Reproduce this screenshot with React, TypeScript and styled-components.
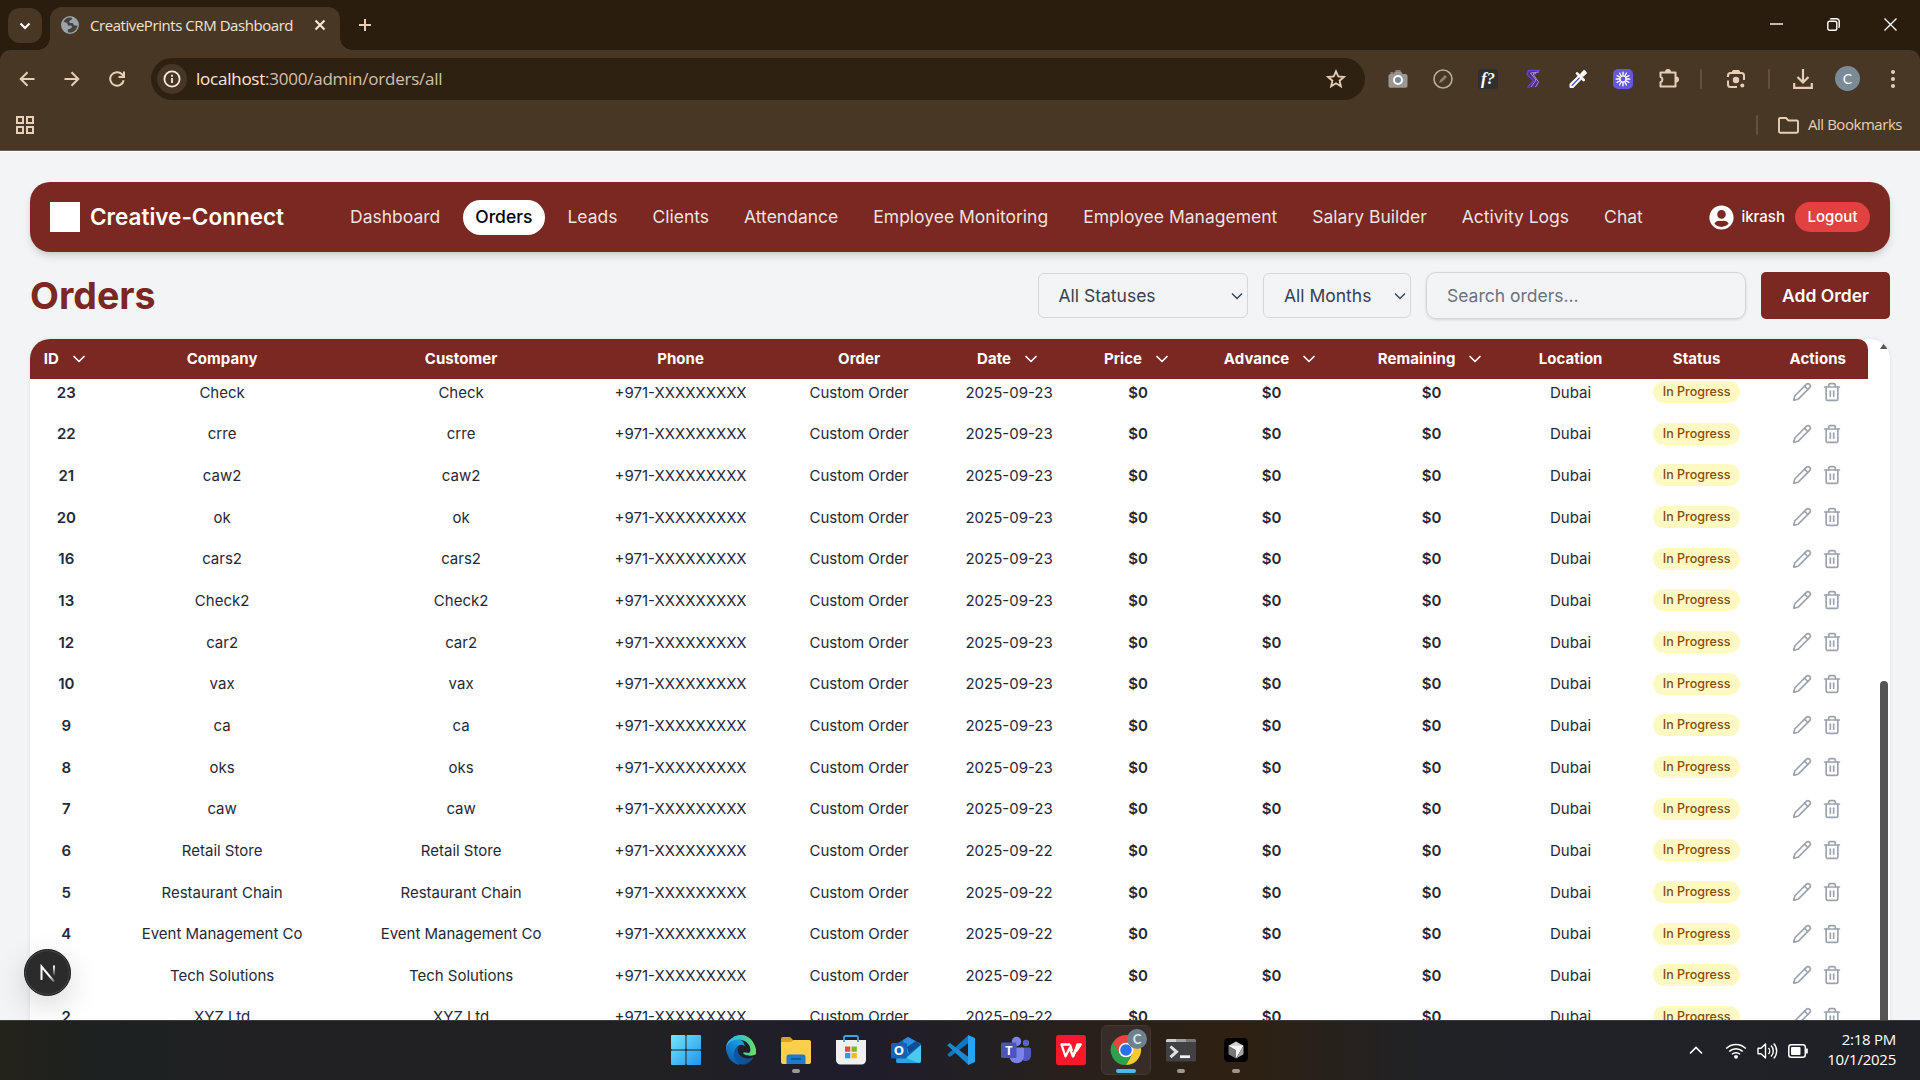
import React from "react";
import styled, { createGlobalStyle, css } from "styled-components";
import { ChevronDown, Pencil, Trash2 } from "lucide-react";
import { FaUserCircle } from "react-icons/fa";

const maroon = "#7a2821";
const cream = "#e6cfb6";
const segoe = `"Segoe UI", "Open Sans", "Noto Sans", sans-serif`;

const GlobalStyle = createGlobalStyle`
  * { box-sizing: border-box; }
  body { margin: 0; overflow: hidden; background: #f3f4f6; font-family: Inter, "Liberation Sans", sans-serif; }
  svg { display: block; flex: none; }
`;

const Screen = styled.div`
  width: 1920px;
  height: 1080px;
  display: flex;
  flex-direction: column;
  overflow: hidden;
`;

/* ---------- Browser frame ---------- */

const Browser = styled.header`
  height: 151px;
  flex: none;
  background: #483725;
  font-family: ${segoe};
  color: ${cream};
  border-bottom: 1px solid #6d5f50;
`;

const TabStrip = styled.div`
  height: 50px;
  display: flex;
  background: #2b1d0d;
`;

const TabSearch = styled.div`
  width: 34px;
  height: 35px;
  margin: 8px 8px 0;
  border-radius: 12px;
  background: #483725;
  display: grid;
  place-items: center;
`;

const Tab = styled.div`
  position: relative;
  width: 290px;
  height: 43px;
  margin-top: 7px;
  border-radius: 12px 12px 0 0;
  background: #483725;
  display: flex;
  align-items: center;
  padding: 0 11px 7px;
  &::before,
  &::after {
    content: "";
    position: absolute;
    bottom: 0;
    width: 12px;
    height: 12px;
  }
  &::before {
    left: -12px;
    background: radial-gradient(circle at 0 0, transparent 11.5px, #483725 12px);
  }
  &::after {
    right: -12px;
    background: radial-gradient(circle at 100% 0, transparent 11.5px, #483725 12px);
  }
`;

const TabTitle = styled.span`
  flex: 1;
  margin: 0 0 0 11px;
  font-size: 15px;
  letter-spacing: -0.44px;
  color: #f6e3cf;
  white-space: nowrap;
`;

const NewTab = styled.div`
  width: 50px;
  display: grid;
  place-items: center;
`;

const WindowControls = styled.div`
  margin-left: auto;
  padding-right: 1px;
  display: flex;
`;

const WindowButton = styled.div`
  width: 57px;
  padding-bottom: 1px;
  display: grid;
  place-items: center;
`;

const ToolbarTop = styled.div`
  background: #2b1d0d;
`;

const Toolbar = styled.div`
  height: 57px;
  display: flex;
  align-items: center;
  padding-left: 4.5px;
  background: #483725;
  border-radius: 10px 10px 0 0;
`;

const ToolCell = styled.div<{ $w?: number }>`
  width: ${(p) => p.$w ?? 45}px;
  height: 40px;
  flex: none;
  display: grid;
  place-items: center;
`;

const Omnibox = styled.div`
  width: 1214px;
  height: 42px;
  margin: 1px 11px 0 11px;
  flex: none;
  display: flex;
  align-items: center;
  border-radius: 21px;
  background: #2f2112;
  padding: 0 19px 0 6px;
`;

const InfoBadge = styled.div`
  width: 30px;
  height: 30px;
  border-radius: 50%;
  background: #463628;
  display: grid;
  place-items: center;
`;

const Url = styled.div`
  flex: 1;
  margin: 0 0 1px 9.5px;
  font-size: 17px;
  letter-spacing: -0.24px;
  color: #d4c0ab;
  b {
    font-weight: 400;
    color: #fbead8;
  }
`;

const Divider = styled.i`
  width: 2px;
  height: 20px;
  border-radius: 1px;
  background: #665039;
`;

const ProfileDot = styled.div`
  width: 25px;
  height: 25px;
  border-radius: 50%;
  background: #7b8b96;
  color: #fff;
  font: 400 14px/25px Lato, sans-serif;
  text-align: center;
`;

const Bookmarks = styled.div`
  height: 36px;
  display: flex;
  align-items: center;
  padding: 0 18px 0 16px;
`;

const BookmarksRight = styled.div`
  margin-left: auto;
  display: flex;
  align-items: center;
  font-size: 15px;
  letter-spacing: -0.46px;
  ${Divider} {
    margin-right: 20px;
  }
  span {
    margin: 0 0 2px 9.5px;
  }
`;

/* ---------- Application page ---------- */

const Page = styled.main`
  height: 869px;
  flex: none;
  padding: 31px 30px 0;
  overflow: hidden;
  background: #f3f4f6;
  display: flex;
  flex-direction: column;
  box-shadow: inset 0 1px #fff;
`;

const Nav = styled.nav`
  height: 70px;
  flex: none;
  display: flex;
  align-items: center;
  padding: 0 20px;
  border-radius: 20px;
  background: ${maroon};
  color: #fff;
  box-shadow: 0 5px 8px -1px rgba(0, 0, 0, 0.14), 0 2px 5px -2px rgba(0, 0, 0, 0.1);
`;

const Logo = styled.div`
  width: 30px;
  height: 30px;
  background: #fff;
`;

const Brand = styled.div`
  width: 194px;
  margin: 0 53.5px 1px 10px;
  font-size: 22.5px;
  font-weight: 600;
  white-space: nowrap;
`;

const NavLinks = styled.div`
  display: flex;
  gap: 10px;
`;

const NavLink = styled.a<{ $active?: boolean }>`
  height: 35px;
  padding: 0 12.5px;
  border-radius: 18px;
  font-size: 17.5px;
  line-height: 34px;
  white-space: nowrap;
  color: rgba(255, 255, 255, 0.88);
  ${(p) =>
    p.$active &&
    css`
      background: #fff;
      color: #000;
      font-weight: 500;
    `}
`;

const Account = styled.div`
  margin-left: auto;
  display: flex;
  align-items: center;
  font-size: 15px;
  font-weight: 500;
  span {
    margin: 0 10px 2px 7.5px;
  }
`;

const Logout = styled.button`
  height: 30px;
  padding: 0 12.5px 1px;
  border: 0;
  border-radius: 15px;
  background: #e14141;
  color: #fff;
  font: inherit;
`;

const Controls = styled.section`
  height: 47px;
  flex: none;
  margin: 20px 0;
  display: flex;
  align-items: center;
  gap: 15px;
`;

const Heading = styled.h1`
  margin: 0 auto 0 0;
  font-size: 37.5px;
  letter-spacing: 0;
  line-height: 47px;
  font-weight: 700;
  color: ${maroon};
`;

const Select = styled.div<{ $w: number }>`
  width: ${(p) => p.$w}px;
  height: 45px;
  display: flex;
  align-items: center;
  justify-content: space-between;
  padding: 0 4px 0 20px;
  border: 1px solid #d4d7dc;
  border-radius: 6px;
  font-size: 17.5px;
  color: #374151;
`;

const Search = styled.input`
  width: 320px;
  height: 47px;
  padding: 0 20px;
  border: 1px solid #d1d5db;
  border-radius: 10px;
  background: transparent;
  font: 400 17.5px Inter, sans-serif;
  box-shadow: 0 1px 3px rgba(0, 0, 0, 0.12);
  &::placeholder {
    color: #6b7280;
    opacity: 1;
  }
`;

const AddButton = styled.button`
  width: 129px;
  height: 47px;
  border: 0;
  border-radius: 5px;
  background: ${maroon};
  color: #fff;
  font: 600 17.5px Inter, sans-serif;
`;

const TableCard = styled.section`
  height: 700px;
  flex: none;
  display: flex;
  border-radius: 20px 20px 0 0;
  background: #fff;
  overflow: hidden;
  box-shadow: 0 0 4px rgba(0, 0, 0, 0.09);
`;

const Table = styled.div`
  width: 1838px;
  display: flex;
  flex-direction: column;
`;

const gridColumns = css`
  display: grid;
  grid-template-columns: 72.6px 239px 239px 200px 157px 143px 115px 152px 168px 110px 142px 100.4px;
  align-items: center;
  justify-items: center;
`;

const HeadRow = styled.div`
  ${gridColumns};
  height: 40px;
  padding-bottom: 1px;
  flex: none;
  background: ${maroon};
  border-top-right-radius: 10px;
  color: #fff;
  font-size: 15px;
  font-weight: 700;
  letter-spacing: 0.05px;
`;

const HeadCell = styled.div`
  display: flex;
  align-items: center;
  gap: 10px;
`;

const BodyScroll = styled.div`
  flex: 1;
  min-height: 0;
  overflow: hidden;
`;

const BodyRows = styled.div`
  margin-top: -7.7px;
`;

const Row = styled.div`
  ${gridColumns};
  height: 41.67px;
  font-size: 15px;
  color: #1f2937;
`;

const Cell = styled.div<{ $strong?: boolean }>`
  font-weight: ${(p) => (p.$strong ? 600 : 400)};
  white-space: nowrap;
`;

const Badge = styled.span`
  height: 22px;
  padding: 0 10px;
  border-radius: 11px;
  background: #fef9c3;
  color: #854d0e;
  font-size: 12.5px;
  font-weight: 500;
  line-height: 22px;
`;

const Actions = styled.div`
  display: flex;
  gap: 10px;
  margin-right: 2px;
  color: #9ca3af;
`;

const Scrollbar = styled.div`
  width: 22px;
  display: flex;
  flex-direction: column;
  align-items: center;
  padding: 4px 0 0 11px;
`;

const Thumb = styled.div`
  width: 8px;
  height: 400px;
  margin: 332px 1px 0 0;
  flex: none;
  border-radius: 4px;
  background: #555;
`;

const ArrowUp = styled.i`
  margin-right: 1px;
  border: 4px solid transparent;
  border-top: 0;
  border-bottom: 6px solid #555;
`;

const DevBadge = styled.div`
  position: absolute;
  left: 24px;
  top: 949px;
  width: 47px;
  height: 47px;
  border-radius: 50%;
  background: #2b2b2b;
  border: 1px solid #161616;
  box-shadow: inset 0 0 0 1px #4a4a4a, 0 10px 30px rgba(0, 0, 0, 0.16);
  display: grid;
  place-items: center;
`;

/* ---------- Taskbar ---------- */

const Taskbar = styled.footer`
  position: relative;
  height: 60px;
  flex: none;
  display: flex;
  border-top: 1px solid #3b3b3b;
  padding-left: 658px;
  font-family: ${segoe};
  background: linear-gradient(
    90deg,
    #24221b 0,
    #1c2121 110px,
    #212123 220px,
    #212123 660px,
    #1f1c2c 850px,
    #222024 960px,
    #2a2018 1120px,
    #2e2112 1240px,
    #212226 1420px,
    #202126 1920px
  );
`;

const AppSlot = styled.div<{ $active?: boolean }>`
  width: ${(p) => (p.$active ? 50 : 55)}px;
  height: 50px;
  margin: ${(p) => (p.$active ? "4px 2.5px 0" : "4px 0 0")};
  border-radius: 6px;
  border: 1px solid ${(p) => (p.$active ? "#443833" : "transparent")};
  background: ${(p) => (p.$active ? "#372c28" : "transparent")};
  display: flex;
  flex-direction: column;
  align-items: center;
  padding-top: 9px;
`;

const Indicator = styled.i<{ $active?: boolean }>`
  width: ${(p) => (p.$active ? 20 : 8)}px;
  height: 4px;
  margin-top: 4px;
  border-radius: 2px;
  background: ${(p) => (p.$active ? "#4cb9ef" : "#9b9792")};
`;

const Tray = styled.div`
  margin-left: auto;
  display: flex;
  align-items: center;
  padding-right: 24px;
  color: #fff;
`;

const TrayCell = styled.div<{ $w: number }>`
  width: ${(p) => p.$w}px;
  display: grid;
  place-items: center;
`;

const Clock = styled.div`
  width: 78px;
  margin-bottom: 4px;
  text-align: right;
  font-size: 15px;
  line-height: 20px;
  letter-spacing: -0.25px;
`;

/* ---------- Icons ---------- */

type StrokeProps = { w: number; h?: number; box: string; sw?: number; color?: string; children: React.ReactNode };
const Stroke = ({ w, h = w, box, sw = 2, color = cream, children }: StrokeProps) => (
  <svg width={w} height={h} viewBox={box} fill="none" stroke={color} strokeWidth={sw}>
    {children}
  </svg>
);

const GlobeIcon = () => (
  <svg width="18" height="18" viewBox="0 0 18 18">
    <circle cx="9" cy="9" r="9" fill="#9aa3ab" />
    <path d="M10.5 1.6c-3.4-.6-6.500 1-8 4 1 .9 2.300.600 3.400 1.500 1 .8.300 2 1.500 2.400 1.300.4 2.200-.3 3.100.5.9.7.3 1.700-.5 2.300-1 .8-2.900.4-3.200 1.800-.2.9.3 1.600.7 2.300 4.600.8 8.500-2.600 9-6.700-1.100-.4-1.800.3-2.900-.1-1.300-.5-1-2-2.300-2.500-1.200-.4-2.600.3-3-.8-.5-1.300 1.700-1.800 2.400-2.700.4-.6.1-1.400-.2-2z" fill="#46413a" />
  </svg>
);

const CameraIcon = () => (
  <svg width="20" height="20" viewBox="0 0 20 20">
    <path d="M2.500 5h3L7 2.500h6L14.500 5h3A2 2 0 0 1 19.500 7v10a1.800 1.800 0 0 1-1.800 1.800H2.300A1.800 1.800 0 0 1 .5 17V7a2 2 0 0 1 2-2z" fill="#9b9792" />
    <path d="M2.500 3h3v2h-3zM7.500 1h5v2h-5z" fill="#85807a" />
    <circle cx="10" cy="11" r="4" fill="#7c8794" stroke="#fff" strokeWidth="2" />
  </svg>
);

const SparkSIcon = () => (
  <svg width="18" height="20" viewBox="0 0 18 20" fill="none" strokeLinejoin="round">
    <path d="M16 1H4L2.500 5.500l6.500 6L3 19h9l4-4.500-5-7z" fill="#4b2f80" />
    <path d="M16 1.500H4.500L3 5.500l6.500 6L3.500 18.500" stroke="#6b3fd0" strokeWidth="1.500" />
    <path d="M15 3 6.500 4l5.500 7-5 7M12 4.500 9 5l5.500 8-3 5" stroke="#b39adf" strokeWidth=".9" />
  </svg>
);

const DropperIcon = () => (
  <svg width="20" height="20" viewBox="0 0 20 20">
    <path d="M12 6 2.500 15.500V18h2.300L14 8.500" fill="#2b4bc4" stroke="#fff" strokeWidth="2" strokeLinejoin="round" />
    <path d="M9 4.300 15.700 11M13 7l4-4" stroke="#fff" strokeWidth="2.600" strokeLinecap="round" />
    <path d="m12 5 4-4.200 3.200 3.200L15 8z" fill="#fff" />
  </svg>
);

const BurstIcon = () => (
  <svg width="20" height="20" viewBox="0 0 20 20">
    <rect width="20" height="20" rx="5" fill="#6557e0" />
    <g stroke="#fff" strokeWidth="1.300" strokeLinecap="round">
      {Array.from({ length: 12 }, (_, i) => (
        <path key={i} d="M10 6.800V3.200" transform={`rotate(${i * 30} 10 10)`} />
      ))}
    </g>
    <circle cx="10" cy="10" r="3" fill="#6557e0" stroke="#fff" strokeWidth="1.200" />
  </svg>
);

const LensIcon = () => (
  <Stroke w={20} box="0 0 20 20" sw={2}>
    <path d="M2 8V6.500A2.500 2.500 0 0 1 4.500 4h11A2.500 2.500 0 0 1 18 6.500V11M2 11.500v4A2.500 2.500 0 0 0 4.500 18H11" />
    <path d="M6.500 3.500 7.500 2h5l1 1.500" />
    <circle cx="10" cy="11" r="3.200" fill={cream} stroke="none" />
    <circle cx="16.300" cy="16.500" r="2" fill={cream} stroke="none" />
  </Stroke>
);

const WindowsIcon = () => (
  <svg width="30" height="30" viewBox="0 0 30 30">
    <defs>
      <linearGradient id="win" x1="0" y1="0" x2="30" y2="30" gradientUnits="userSpaceOnUse">
        <stop offset="0" stopColor="#74e6fb" />
        <stop offset="1" stopColor="#1f95ee" />
      </linearGradient>
    </defs>
    <g fill="url(#win)">
      <rect width="14.500" height="14.500" rx="1" />
      <rect x="15.500" width="14.500" height="14.500" rx="1" />
      <rect y="15.500" width="14.500" height="14.500" rx="1" />
      <rect x="15.500" y="15.500" width="14.500" height="14.500" rx="1" />
    </g>
  </svg>
);

const EdgeIcon = () => (
  <svg width="30" height="30" viewBox="0 0 256 256">
    <defs>
      <linearGradient id="eA" x1="63" y1="177" x2="241" y2="177" gradientUnits="userSpaceOnUse">
        <stop offset="0" stopColor="#0c59a4" />
        <stop offset="1" stopColor="#114a8b" />
      </linearGradient>
      <linearGradient id="eB" x1="157" y1="100" x2="46" y2="222" gradientUnits="userSpaceOnUse">
        <stop offset="0" stopColor="#1b9de2" />
        <stop offset=".5" stopColor="#1380d2" />
        <stop offset="1" stopColor="#0a63b0" />
      </linearGradient>
      <linearGradient id="eC" x1="10" y1="70" x2="250" y2="90" gradientUnits="userSpaceOnUse">
        <stop offset="0" stopColor="#35b5ee" />
        <stop offset=".5" stopColor="#36c8c0" />
        <stop offset="1" stopColor="#66e05f" />
      </linearGradient>
    </defs>
    <path fill="url(#eA)" d="M231 190c-3 2-7 3-10 5-11 4-23 6-35 6-46 0-86-32-86-72 0-11 6-21 16-26-42 2-52 45-52 70 0 71 66 79 80 79 8 0 19-2 26-5 27-9 48-28 63-53 2-3-1-6-2-4z" />
    <path fill="url(#eB)" d="M106 241c-9-5-17-12-23-21-29-39-20-95 19-124 4-3 8-6 13-8 3-2 9-4 17-4 11 0 21 6 28 14-1-35-33-70-86-70C18 28 0 80 0 113c0 16 3 32 10 47a128 128 0 0 0 107 95c-4-4-7-8-11-14z" />
    <path fill="url(#eC)" d="M152 149c-1 1-4 3-4 7 0 4 2 7 6 10 20 14 58 12 58 12 15 0 30-4 43-12a84 84 0 0 0 1-44C238 46 186 0 128 0A128 128 0 0 0 0 126c1-47 48-86 104-86 5 0 31 1 55 13 21 11 32 25 40 38 8 14 9 31 9 38 0 7-3 17-11 25z" transform="translate(0 -1)" />
  </svg>
);

const ExplorerIcon = () => (
  <svg width="30" height="30" viewBox="0 0 30 30">
    <path d="M0 4a2 2 0 0 1 2-2h7l3 3v5H0z" fill="#e0a21c" />
    <path d="M0 7h10l2.500-2H28a2 2 0 0 1 2 2v20a2 2 0 0 1-2 2H2a2 2 0 0 1-2-2z" fill="#fbce4c" />
    <path d="M5.500 29v-7a2.500 2.500 0 0 1 2.500-2.500h14a2.500 2.500 0 0 1 2.500 2.500v7z" fill="#1a7ccb" />
    <path d="M10 23h10v1.800H10z" fill="#0e589d" />
  </svg>
);

const StoreIcon = () => (
  <svg width="30" height="30" viewBox="0 0 30 30">
    <path d="M8 7V2.500A1.500 1.500 0 0 1 9.500 1h11A1.500 1.500 0 0 1 22 2.500V7" fill="none" stroke="#3ba5e6" strokeWidth="1.800" />
    <path d="M0 5h30v20a4.500 4.500 0 0 1-4.500 4.500h-21A4.500 4.500 0 0 1 0 25z" fill="#f1f0f1" />
    <path d="M8 5v2M22 5v2" stroke="#3ba5e6" strokeWidth="1.800" />
    <path d="M9 11.500h5.300v5.300H9z" fill="#e8502a" />
    <path d="M15.500 11.500h5.300v5.300h-5.300z" fill="#7fb72c" />
    <path d="M9 18h5.300v5.300H9z" fill="#2a9fe8" />
    <path d="M15.500 18h5.300v5.300h-5.300z" fill="#fab91a" />
  </svg>
);

const OutlookIcon = () => (
  <svg width="30" height="30" viewBox="0 0 30 30">
    <path d="M5 9 17 2l13 7v17a2 2 0 0 1-2 2H7a2 2 0 0 1-2-2z" fill="#1068b8" />
    <path d="m12 5 5-3 13 7-13 10z" fill="#2d8ee0" />
    <path d="m16 12 9-6 5 3.500-12 9z" fill="#0c4f96" />
    <path d="M30 10v16a2 2 0 0 1-2 2H9z" fill="#4cc8f2" />
    <path d="m7 20 21 8H7a2 2 0 0 1-2-2z" fill="#2fa2e4" />
    <rect y="8" width="16" height="15.500" rx="1.500" fill="#1063ba" />
    <text x="8" y="20.300" textAnchor="middle" fontFamily="Open Sans" fontWeight="700" fontSize="13" fill="#fff">O</text>
  </svg>
);

const CodeIcon = () => (
  <svg width="30" height="30" viewBox="0 0 30 30">
    <path d="m1.200 19.800 2.600 2.300L22.500 8V0z" fill="#0f78c4" />
    <path d="m1.200 10.200 2.600-2.300L22.500 22v8z" fill="#1a8ad6" />
    <path d="m22 0 7 3v24l-7 3z" fill="#27a5f0" />
  </svg>
);

const TeamsIcon = () => (
  <svg width="30" height="30" viewBox="0 0 30 30">
    <circle cx="25" cy="8" r="3.200" fill="#5b62c5" />
    <path d="M20 12.500h8.500a1.500 1.500 0 0 1 1.500 1.500v6.500a5.500 5.500 0 0 1-8 5z" fill="#5059c0" />
    <circle cx="15.500" cy="6.500" r="4.700" fill="#7b83eb" />
    <path d="M8.500 12.500h13A1.500 1.500 0 0 1 23 14v7a7.300 7.300 0 0 1-14.600 0z" fill="#7b83eb" />
    <rect y="7.500" width="15.500" height="15.500" rx="1.500" fill="#4b53bc" />
    <text x="7.800" y="20" textAnchor="middle" fontFamily="Open Sans" fontWeight="700" fontSize="12.500" fill="#fff">T</text>
  </svg>
);

const WpsIcon = () => (
  <svg width="30" height="30" viewBox="0 0 30 30">
    <rect width="30" height="30" rx="2.500" fill="#f9182b" />
    <g fill="none" stroke="#fff" strokeWidth="2.300" strokeLinejoin="round">
      <path d="M14 9.500H5.500l4 12 4.200-8.500 3.300 8.500 3-6.500" />
      <path d="m16 16-2-6.500M17 21.500l4.500-12h3.200l-4.700 7" />
    </g>
  </svg>
);

const ChromeIcon = () => (
  <svg width="36" height="30" viewBox="0 0 36 30" overflow="visible">
    <g transform="translate(-.5 0)">
      <path d="M5.500 7A15 15 0 0 0 18.500 30l6-11-12-1z" fill="#2ba24c" />
      <path d="M24.900 18.700 18.500 30A15 15 0 0 0 31.500 7.500h-13z" fill="#fcc934" />
      <path d="M5.500 7.500A15 15 0 0 1 31.500 7.500h-13l-6.500 11z" fill="#e8453c" />
      <circle cx="18.500" cy="15" r="7.300" fill="#fff" />
      <circle cx="18.500" cy="15" r="5.800" fill="#2b72e8" />
    </g>
    <circle cx="29" cy="4" r="10" fill="#6f828c" />
    <text x="29" y="8.800" textAnchor="middle" fontFamily="Lato" fontWeight="700" fontSize="13" fill="#dfe6ea">C</text>
  </svg>
);

const TerminalIcon = () => (
  <svg width="30" height="30" viewBox="0 0 30 30">
    <rect y="4" width="30" height="22.500" rx="1.500" fill="#3f4143" />
    <path d="M0 5.500A1.500 1.500 0 0 1 1.500 4H10v3H0z" fill="#cfcfcf" />
    <path d="M10 4h10v3H10z" fill="#a0a0a0" />
    <path d="M20 4h8.500A1.500 1.500 0 0 1 30 5.500V7H20z" fill="#777" />
    <path d="m4.500 11.500 6 5.300-6 5.300" fill="none" stroke="#e2e2e2" strokeWidth="3" />
    <path d="M14 20.300h10v2.800H14z" fill="#f2f2f2" />
  </svg>
);

const CubeIcon = () => (
  <svg width="30" height="30" viewBox="0 0 30 30">
    <rect x="3" y="3" width="24" height="24" rx="4.500" fill="#000" />
    <path d="m15 6.500 7.500 4.200L15 15 7.500 10.700z" fill="#cfcfcf" />
    <path d="M7.500 10.700 15 15v8.500l-7.500-4.200z" fill="#777" />
    <path d="M7.500 10.700h15L15 23.500V15z" fill="#f5f5f5" />
    <path d="M22.500 10.700v8.600L15 23.500z" fill="#a5a5a5" />
  </svg>
);

/* ---------- Data ---------- */

const navItems = ["Dashboard", "Orders", "Leads", "Clients", "Attendance", "Employee Monitoring", "Employee Management", "Salary Builder", "Activity Logs", "Chat"];

const columns: [string, boolean][] = [
  ["ID", true],
  ["Company", false],
  ["Customer", false],
  ["Phone", false],
  ["Order", false],
  ["Date", true],
  ["Price", true],
  ["Advance", true],
  ["Remaining", true],
  ["Location", false],
  ["Status", false],
  ["Actions", false],
];

const orders: [string, string, string][] = [
  ["23", "Check", "2025-09-23"],
  ["22", "crre", "2025-09-23"],
  ["21", "caw2", "2025-09-23"],
  ["20", "ok", "2025-09-23"],
  ["16", "cars2", "2025-09-23"],
  ["13", "Check2", "2025-09-23"],
  ["12", "car2", "2025-09-23"],
  ["10", "vax", "2025-09-23"],
  ["9", "ca", "2025-09-23"],
  ["8", "oks", "2025-09-23"],
  ["7", "caw", "2025-09-23"],
  ["6", "Retail Store", "2025-09-22"],
  ["5", "Restaurant Chain", "2025-09-22"],
  ["4", "Event Management Co", "2025-09-22"],
  ["3", "Tech Solutions", "2025-09-22"],
  ["2", "XYZ Ltd", "2025-09-22"],
];

const apps: { icon: React.ReactNode; open?: boolean; active?: boolean }[] = [
  { icon: <WindowsIcon /> },
  { icon: <EdgeIcon /> },
  { icon: <ExplorerIcon />, open: true },
  { icon: <StoreIcon /> },
  { icon: <OutlookIcon /> },
  { icon: <CodeIcon /> },
  { icon: <TeamsIcon /> },
  { icon: <WpsIcon /> },
  { icon: <ChromeIcon />, open: true, active: true },
  { icon: <TerminalIcon />, open: true },
  { icon: <CubeIcon />, open: true },
];

const SelectChevron = () => (
  <Stroke w={12} h={8} box="0 0 12 8" sw={1.4} color="#374151">
    <path d="m1 1.500 5 5 5-5" />
  </Stroke>
);

const BrowserFrame = () => (
  <Browser>
    <TabStrip>
      <TabSearch>
        <Stroke w={12} h={8} box="0 0 12 8" color="#fff">
          <path d="m1.500 1.500 4.500 4.500 4.500-4.500" />
        </Stroke>
      </TabSearch>
      <Tab>
        <GlobeIcon />
        <TabTitle>CreativePrints CRM Dashboard</TabTitle>
        <Stroke w={18} box="0 0 18 18" color="#fbead8">
          <path d="m4.500 4.500 9 9m0-9-9 9" />
        </Stroke>
      </Tab>
      <NewTab>
        <Stroke w={14} box="0 0 14 14">
          <path d="M7 1v12M1 7h12" />
        </Stroke>
      </NewTab>
      <WindowControls>
        <WindowButton>
          <Stroke w={13} box="0 0 13 13" sw={1.4} color="#fff"><path d="M0 6h13" /></Stroke>
        </WindowButton>
        <WindowButton>
          <Stroke w={13} box="0 0 13 13" sw={1.4} color="#fff">
            <rect x=".8" y="3.200" width="9" height="9" rx="1.800" />
            <path d="M3.200 1.300A2 2 0 0 1 4.500.8h5.200a2.500 2.500 0 0 1 2.500 2.500v5.200a2 2 0 0 1-.6 1.300" />
          </Stroke>
        </WindowButton>
        <WindowButton>
          <Stroke w={13} box="0 0 13 13" sw={1.4} color="#fff"><path d="m.5.5 12 12m0-12-12 12" /></Stroke>
        </WindowButton>
      </WindowControls>
    </TabStrip>
    <ToolbarTop>
      <Toolbar>
        <ToolCell><Stroke w={16} box="0 0 16 16"><path d="M15.500 8H2m6.500-6.800L1.700 8l6.800 6.800" /></Stroke></ToolCell>
        <ToolCell><Stroke w={16} box="0 0 16 16"><path d="M.5 8H14M7.500 1.200 14.300 8l-6.800 6.800" /></Stroke></ToolCell>
        <ToolCell>
          <Stroke w={16} box="0 0 16 16">
            <path d="M14.700 9.200A6.800 6.800 0 1 1 13 3.300L15 5.500M15 .5v5.500H9.500" />
          </Stroke>
        </ToolCell>
        <Omnibox>
          <InfoBadge>
            <Stroke w={18} box="0 0 18 18" sw={1.8} color="#fbead8">
              <circle cx="9" cy="9" r="7.600" />
              <path d="M9 8v5M9 4.800v1.900" />
            </Stroke>
          </InfoBadge>
          <Url><b>localhost</b>:3000/admin/orders/all</Url>
          <Stroke w={20} box="0 0 20 20" sw={1.8}>
            <path d="m10 2.300 2.300 5.200 5.600.5-4.300 3.700 1.300 5.600L10 14.300l-4.900 3 1.300-5.600L2.100 8l5.600-.5z" />
          </Stroke>
        </Omnibox>
        <ToolCell><CameraIcon /></ToolCell>
        <ToolCell>
          <Stroke w={20} box="0 0 20 20" sw={1.6} color="#b9ab9a">
            <circle cx="10" cy="10" r="9" />
            <path d="m6 14 1-3 5-5 2 2-5 5z" fill="#8a8075" stroke="none" />
          </Stroke>
        </ToolCell>
        <ToolCell>
          <svg width="20" height="20" viewBox="0 0 20 20">
            <rect width="20" height="20" rx="3" fill="#2d2f31" />
            <text x="10" y="14.500" textAnchor="middle" fontFamily="Liberation Serif" fontStyle="italic" fontWeight="700" fontSize="17" fill="#fff">f?</text>
          </svg>
        </ToolCell>
        <ToolCell><SparkSIcon /></ToolCell>
        <ToolCell><DropperIcon /></ToolCell>
        <ToolCell><BurstIcon /></ToolCell>
        <ToolCell $w={47}>
          <Stroke w={22} box="0 0 22 22">
            <path d="M2.500 4.500h15v14h-15v-4.200a3 3 0 0 0 0-5.600z" strokeLinejoin="round" />
            <path d="M8 4a2 2 0 0 1 4 0zM18 9.500a2 2 0 0 1 0 4z" fill={cream} />
          </Stroke>
        </ToolCell>
        <ToolCell $w={17}><Divider /></ToolCell>
        <ToolCell $w={52}><LensIcon /></ToolCell>
        <ToolCell $w={15}><Divider /></ToolCell>
        <ToolCell $w={53}>
          <Stroke w={20} box="0 0 20 20" sw={2.2}>
            <path d="M10 0v13M4.500 8l5.500 5.500L15.500 8M1.200 14v4.800h17.600V14" />
          </Stroke>
        </ToolCell>
        <ToolCell $w={36}><ProfileDot>C</ProfileDot></ToolCell>
        <ToolCell $w={54}>
          <svg width="4" height="18" viewBox="0 0 4 18" fill={cream}>
            <circle cx="2" cy="2" r="2" />
            <circle cx="2" cy="9" r="2" />
            <circle cx="2" cy="16" r="2" />
          </svg>
        </ToolCell>
      </Toolbar>
    </ToolbarTop>
    <Bookmarks>
      <Stroke w={18} box="0 0 18 18">
        <path d="M1 1h6v6H1zM11 1h6v6h-6zM1 11h6v6H1zM11 11h6v6h-6z" />
      </Stroke>
      <BookmarksRight>
        <Divider />
        <Stroke w={21} h={17} box="0 0 21 17" sw={1.9}>
          <path d="M1 2.200A1.200 1.200 0 0 1 2.200 1H8l2.500 2.500h8.300A1.200 1.200 0 0 1 20 4.700v9.800a1.200 1.200 0 0 1-1.200 1.200H2.200A1.200 1.200 0 0 1 1 14.500z" />
        </Stroke>
        <span>All Bookmarks</span>
      </BookmarksRight>
    </Bookmarks>
  </Browser>
);

const OrdersTable = () => (
  <TableCard>
    <Table>
      <HeadRow>
        {columns.map(([label, sortable]) => (
          <HeadCell key={label}>
            {label}
            {sortable && <ChevronDown size={20} />}
          </HeadCell>
        ))}
      </HeadRow>
      <BodyScroll>
        <BodyRows>
          {orders.map(([id, name, date]) => (
            <Row key={id}>
              <Cell $strong>{id}</Cell>
              <Cell>{name}</Cell>
              <Cell>{name}</Cell>
              <Cell>+971-XXXXXXXXX</Cell>
              <Cell>Custom Order</Cell>
              <Cell>{date}</Cell>
              <Cell $strong>$0</Cell>
              <Cell $strong>$0</Cell>
              <Cell $strong>$0</Cell>
              <Cell>Dubai</Cell>
              <Badge>In Progress</Badge>
              <Actions>
                <Pencil size={20} />
                <Trash2 size={20} />
              </Actions>
            </Row>
          ))}
        </BodyRows>
      </BodyScroll>
    </Table>
    <Scrollbar>
      <ArrowUp />
      <Thumb />
    </Scrollbar>
  </TableCard>
);

export default function App() {
  return (
    <Screen>
      <GlobalStyle />
      <BrowserFrame />
      <Page>
        <Nav>
          <Logo />
          <Brand>Creative-Connect</Brand>
          <NavLinks>
            {navItems.map((item) => (
              <NavLink key={item} $active={item === "Orders"}>{item}</NavLink>
            ))}
          </NavLinks>
          <Account>
            <FaUserCircle size={25} />
            <span>ikrash</span>
            <Logout>Logout</Logout>
          </Account>
        </Nav>
        <Controls>
          <Heading>Orders</Heading>
          <Select $w={210.5}>All Statuses<SelectChevron /></Select>
          <Select $w={148}>All Months<SelectChevron /></Select>
          <Search placeholder="Search orders..." />
          <AddButton>Add Order</AddButton>
        </Controls>
        <OrdersTable />
      </Page>
      <DevBadge>
        <svg width="16" height="18" viewBox="0 0 16 18" fill="none" strokeWidth="2">
          <defs>
            <linearGradient id="nStem" x1="0" y1="0" x2="0" y2="1" gradientUnits="objectBoundingBox">
              <stop offset="0" stopColor="#fff" />
              <stop offset="1" stopColor="#fff" stopOpacity="0.100" />
            </linearGradient>
            <linearGradient id="nDiag" x1="2" y1="2" x2="15" y2="18" gradientUnits="userSpaceOnUse">
              <stop offset=".6" stopColor="#fff" />
              <stop offset="1" stopColor="#fff" stopOpacity="0.200" />
            </linearGradient>
          </defs>
          <path d="M1.500 16V2.500L14 17.500" stroke="url(#nDiag)" />
          <rect x="13" y="1.500" width="2" height="10" fill="url(#nStem)" />
        </svg>
      </DevBadge>
      <Taskbar>
        {apps.map((app, i) => (
          <AppSlot key={i} $active={app.active}>
            {app.icon}
            {app.open && <Indicator $active={app.active} />}
          </AppSlot>
        ))}
        <Tray>
          <TrayCell $w={38}>
            <Stroke w={14} h={9} box="0 0 14 9" sw={1.6} color="#fff"><path d="m1 7.500 6-6 6 6" /></Stroke>
          </TrayCell>
          <TrayCell $w={42}>
            <Stroke w={22} h={17} box="0 0 22 17" sw={1.5} color="#fff">
              <path d="M1.200 6.500a13.800 13.800 0 0 1 19.600 0M4.200 9.500a9.600 9.600 0 0 1 13.600 0M7 12.300a5.700 5.700 0 0 1 8 0" />
              <circle cx="11" cy="14.800" r="1.900" fill="#fff" stroke="none" />
            </Stroke>
          </TrayCell>
          <TrayCell $w={20}>
            <Stroke w={21} h={18} box="0 0 21 18" sw={1.4} color="#fff">
              <path d="M1 6.300h3L8.500 2v14L4 11.700H1z" strokeLinejoin="round" />
              <path d="M11.500 6a4.300 4.300 0 0 1 0 6M14 3.500a7.800 7.800 0 0 1 0 11M16.700 1.500a11 11 0 0 1 0 15" />
            </Stroke>
          </TrayCell>
          <TrayCell $w={41}>
            <Stroke w={20} h={14} box="0 0 20 14" sw={1.5} color="#fff">
              <rect x=".8" y=".8" width="16.500" height="12.400" rx="2.500" />
              <rect x="3" y="3" width="9.500" height="8" rx="1" fill="#fff" stroke="none" />
              <path d="M18.800 4.500v5" strokeWidth="2" />
            </Stroke>
          </TrayCell>
          <Clock>
            2:18 PM
            <br />
            10/1/2025
          </Clock>
        </Tray>
      </Taskbar>
    </Screen>
  );
}
